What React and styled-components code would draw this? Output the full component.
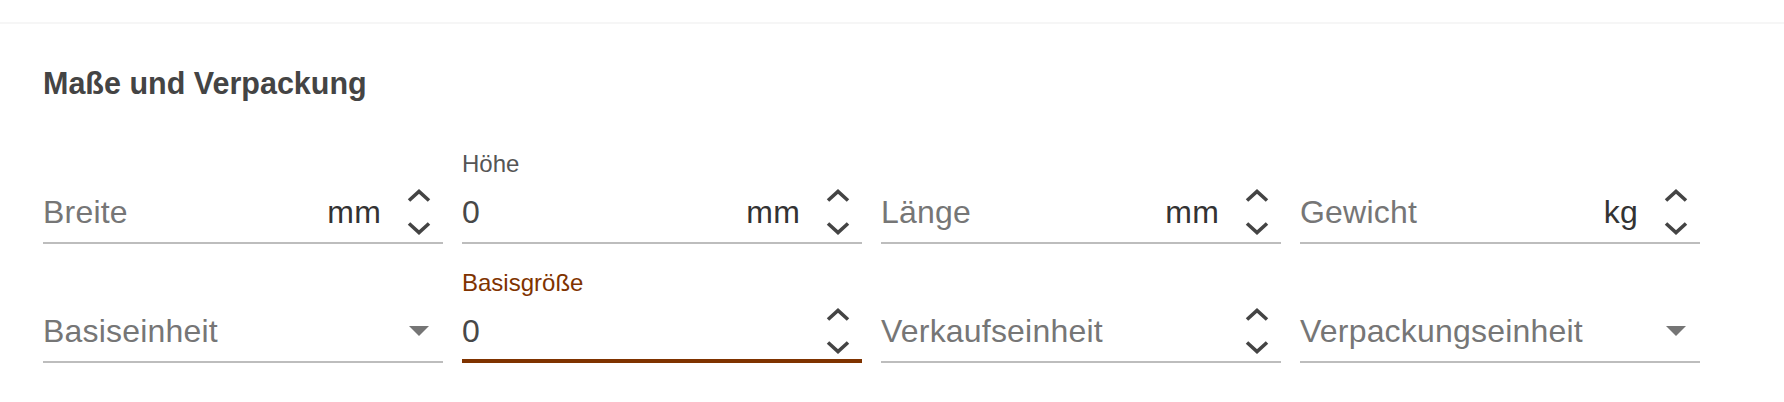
import React from 'react'
import styled, { createGlobalStyle } from 'styled-components'

const fields = [
    { placeholder: 'Breite', unit: 'mm', control: 'spin' },
    { label: 'Höhe', value: '0', unit: 'mm', control: 'spin' },
    { placeholder: 'Länge', unit: 'mm', control: 'spin' },
    { placeholder: 'Gewicht', unit: 'kg', control: 'spin' },
    { placeholder: 'Basiseinheit', control: 'select' },
    { label: 'Basisgröße', value: '0', control: 'spin', focused: true },
    { placeholder: 'Verkaufseinheit', control: 'spin' },
    { placeholder: 'Verpackungseinheit', control: 'select' },
]

function Chevron ({ down }) {
    return (
        <svg width="26" height="14" viewBox="0 0 26 14">
            <polyline
                points={down ? '3,2.5 13,11.5 23,2.5' : '3,11.5 13,2.5 23,11.5'}
                fill="none"
                stroke="#444"
                strokeWidth="3.6"
            />
        </svg>
    )
}

function Field (props) {
    let control = null
    if (props.control === 'spin') {
        control = (
            <Spinner>
                <Chevron />
                <Chevron down />
            </Spinner>
        )
    } else if (props.control === 'select') {
        control = (
            <Adornment>
                <svg width="20" height="10" viewBox="0 0 20 10">
                    <path d="M0 0 L10 10 L20 0 Z" fill="#757575" />
                </svg>
            </Adornment>
        )
    }
    return (
        <FieldBox>
            <Label $focused={props.focused}>{ props.label || '' }</Label>
            <InputRow $focused={props.focused}>
                { props.value
                    ? <Value>{ props.value }</Value>
                    : <Placeholder>{ props.placeholder }</Placeholder> }
                { props.unit && <Unit>{ props.unit }</Unit> }
                { control }
            </InputRow>
        </FieldBox>
    )
}

export default function App () {
    return (
        <>
            <GlobalStyle />
            <TopBar />
            <Section>
                <Title>Maße und Verpackung</Title>
                <Grid>
                    { fields.map((f, i) => <Field key={i} {...f} />) }
                </Grid>
            </Section>
        </>
    )
}

const GlobalStyle = createGlobalStyle`
    body {
        margin: 0;
        background: #fff;
        font-family: "Liberation Sans", Arial, Helvetica, sans-serif;
    }
`
const TopBar = styled.div`
    height: 22px;
    border-bottom: 2px solid #f6f6f6;
`
const Section = styled.section`
    padding: 41px 84px 0 43px;
`
const Title = styled.h2`
    margin: 0 0 47px;
    font-size: 30.5px;
    line-height: 36px;
    font-weight: bold;
    color: #444;
`
const Grid = styled.div`
    display: grid;
    grid-template-columns: repeat(4, 400px);
    column-gap: 19px;
    row-gap: 23px;
`
const FieldBox = styled.div`
    display: flex;
    flex-direction: column;
`
const Label = styled.div`
    height: 32px;
    margin-bottom: 10px;
    font-size: 24px;
    line-height: 32px;
    color: ${ props => props.$focused ? '#7f3300' : '#555' };
`
const InputRow = styled.div`
    position: relative;
    display: flex;
    align-items: center;
    height: 40px;
    padding: 2px 0 10px;
    border-bottom: 2px solid #bdbdbd;
    font-size: 32px;
    line-height: 40px;
    letter-spacing: 0.2px;
    &::after {
        content: '';
        display: ${ props => props.$focused ? 'block' : 'none' };
        position: absolute;
        left: 0;
        right: 0;
        bottom: -2px;
        height: 4px;
        background: #7f3300;
    }
`
const Placeholder = styled.span`
    flex: 1;
    color: #767676;
`
const Value = styled.span`
    flex: 1;
    color: #484848;
`
const Unit = styled.span`
    margin-right: 14px;
    color: #333;
`
const Adornment = styled.div`
    display: flex;
    align-items: center;
    justify-content: center;
    width: 48px;
    height: 40px;
`
const Spinner = styled.div`
    display: flex;
    flex-direction: column;
    align-items: center;
    justify-content: space-between;
    width: 48px;
    height: 46px;
    margin: -3px 0;
`
